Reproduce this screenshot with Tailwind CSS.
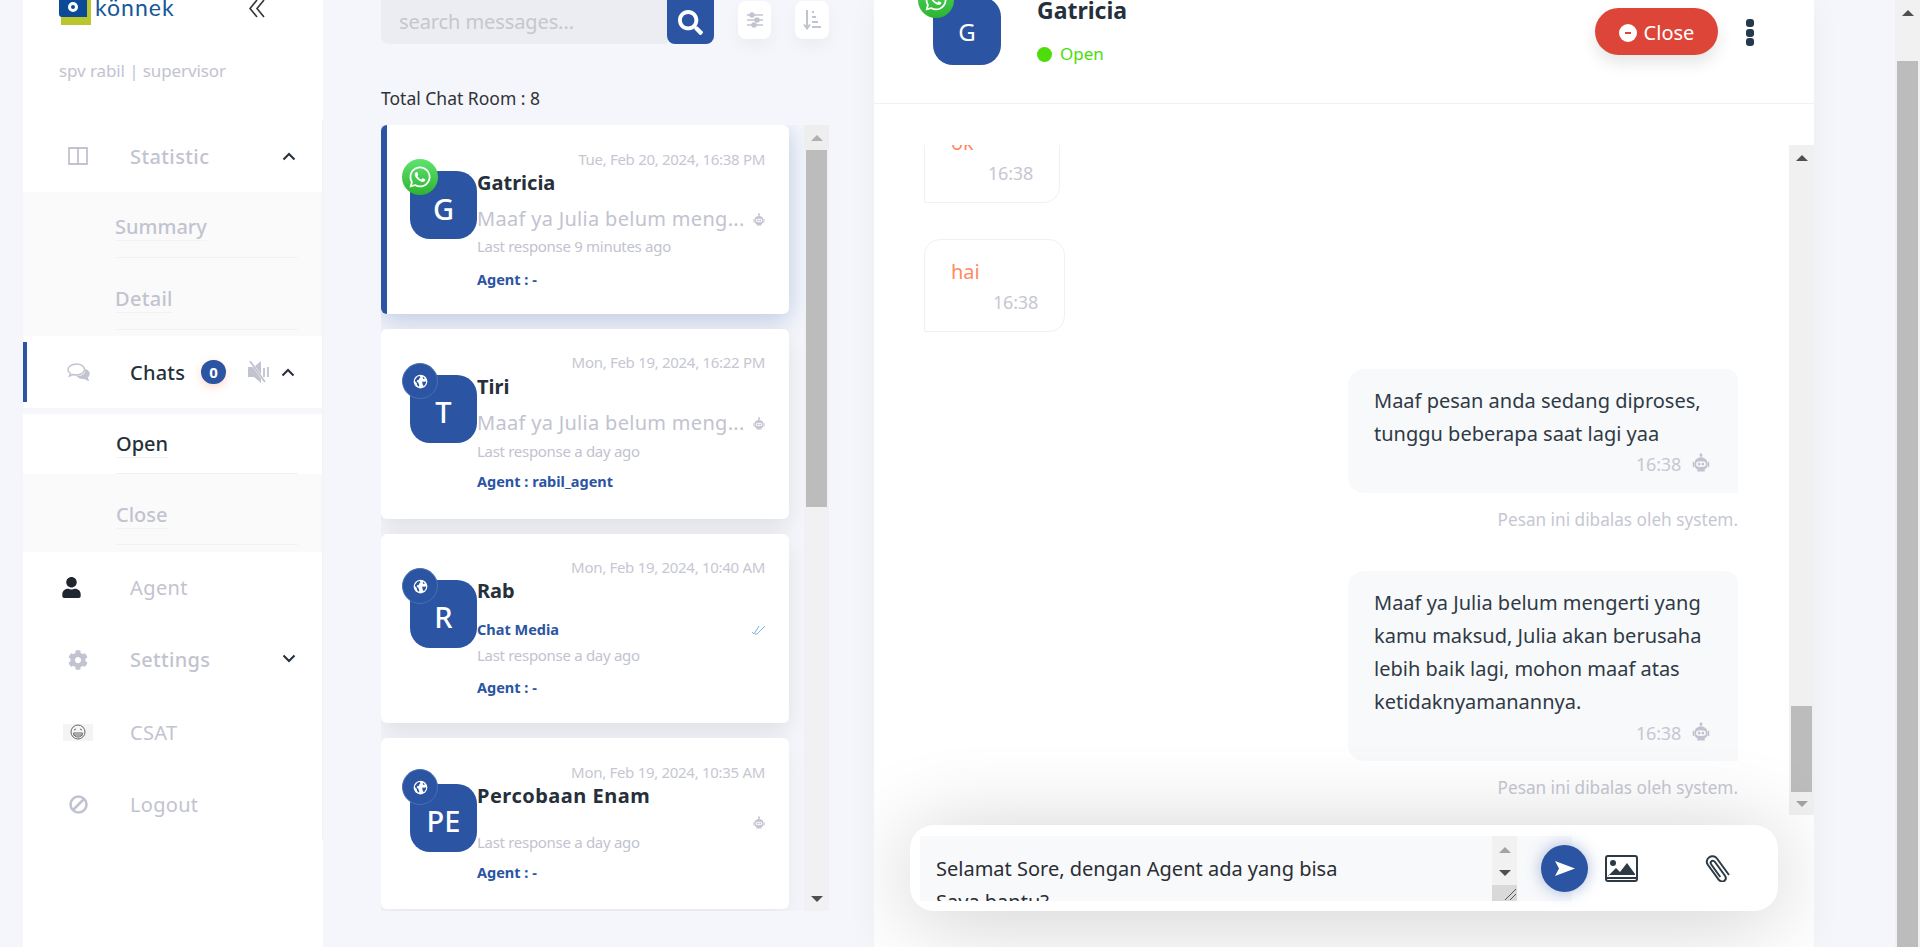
<!DOCTYPE html>
<html lang="id">
<head>
<meta charset="utf-8">
<title>Konnek Chat</title>
<script src="https://cdn.jsdelivr.net/npm/@tailwindcss/browser@4"></script>
</head>
<body class="h-[947px] overflow-hidden bg-[#f4f6fb] text-[#25303b] [font-family:'Noto_Sans',sans-serif]">
<svg class="hidden" aria-hidden="true">
  <symbol id="wa" viewBox="0 0 448 512"><path fill="currentColor" d="M380.9 97.1C339 55.1 283.2 32 223.9 32c-122.4 0-222 99.6-222 222 0 39.1 10.2 77.3 29.6 111L0 480l117.7-30.9c32.4 17.7 68.9 27 106.1 27h.1c122.3 0 224.1-99.6 224.1-222 0-59.3-25.2-115-67.1-157zm-157 341.6c-33.2 0-65.7-8.9-94-25.7l-6.7-4-69.8 18.3L72 359.2l-4.4-7c-18.5-29.4-28.2-63.3-28.2-98.2 0-101.7 82.8-184.5 184.6-184.5 49.3 0 95.6 19.2 130.4 54.1 34.8 34.9 56.2 81.2 56.1 130.5 0 101.8-84.9 184.6-186.6 184.6zm101.2-138.2c-5.5-2.8-32.8-16.2-37.9-18-5.1-1.9-8.8-2.8-12.5 2.8-3.7 5.6-14.3 18-17.6 21.8-3.2 3.7-6.5 4.2-12 1.4-32.6-16.3-54-29.1-75.5-66-5.7-9.8 5.7-9.1 16.3-30.3 1.8-3.7.9-6.9-.5-9.7-1.4-2.8-12.5-30.1-17.1-41.2-4.5-10.8-9.1-9.3-12.5-9.5-3.2-.2-6.9-.2-10.6-.2-3.7 0-9.7 1.4-14.8 6.9-5.1 5.6-19.4 19-19.4 46.3 0 27.3 19.9 53.7 22.6 57.4 2.8 3.7 39.1 59.7 94.8 83.8 35.2 15.2 49 16.5 66.6 13.9 10.7-1.6 32.8-13.4 37.4-26.4 4.6-13 4.6-24.1 3.2-26.4-1.3-2.5-5-3.9-10.5-6.6z"/></symbol>
  <symbol id="globe" viewBox="0 0 24 24"><circle cx="12" cy="12" r="11" fill="currentColor"/><path fill="#2b54a3" d="M3 9.500 7 4.500l3.500-1.500 1.500 2-2 2-1 2.500-2.500.5-.5 2 2.500 2 1.500 4-.5 2.500-3-3-.5-3-2.500-2.500zM15 12l3.500.5 2.500-1-.5 3.500-3 4.500-1.500-1.500-1-3zM16 4.500l3 2.500-2 1-1.500-1.500z"/></symbol>
  <symbol id="robot" viewBox="0 0 24 24"><path fill="currentColor" d="M11.200 0h1.600v5h-1.600z"/><circle cx="12" cy="2" r="2" fill="currentColor"/><circle cx="12" cy="14" r="9" fill="currentColor"/><path fill="currentColor" d="M1 11h2v7H1zM21 11h2v7h-2zM7 22h10v2H7z"/><rect x="5.500" y="10.500" width="13" height="7" rx="3.500" fill="#fff"/><circle cx="9.500" cy="14" r="2" fill="currentColor"/><circle cx="14.500" cy="14" r="2" fill="currentColor"/></symbol>
  <symbol id="chev" viewBox="0 0 14 9"><path d="M1.500 7.500 7 2l5.500 5.500" fill="none" stroke="currentColor" stroke-width="2"/></symbol>
</svg>

<div class="flex h-[947px]">
  <!-- Sidebar -->
  <aside class="ml-[23px] w-[300px] shrink-0 bg-white">
    <div class="relative h-[120px] pl-[36px]">
      <div class="flex h-[24px] items-center">
        <div class="relative -mt-[2px] h-[25px] w-[32px] shrink-0">
          <div class="absolute bottom-[-1px] left-[2px] right-0 top-0 bg-[#b9c62e]"></div>
          <div class="absolute -top-[2px] left-0 right-[4px] flex h-[20px] items-center justify-center rounded-bl-[3px] bg-[#0c4a97]">
            <div class="h-[10px] w-[10px] rounded-full border-[3px] border-white"></div>
          </div>
        </div>
        <span class="ml-[4px] -mt-[9px] text-[23px] leading-none tracking-[1px] text-[#15589b] [font-family:'Lato',sans-serif]">könnek</span>
        <svg class="-mt-[7px] ml-[74px]" width="16" height="18" viewBox="0 0 16 18"><path d="M8 0 1 8.500 8 17M15 0 8 8.500 15 17" fill="none" stroke="#333" stroke-width="1.600"/></svg>
      </div>
      <p class="mt-[36px] text-[17px] leading-[22px] tracking-[-.1px] text-[#c2c3d0]">spv rabil | supervisor</p>
    </div>

    <div class="h-[720px] border-r border-[#f2f2f5] bg-white">
      <!-- Statistic -->
      <div class="flex h-[72px] items-center">
        <div class="flex w-[107px] justify-center pl-[3px]">
          <svg width="20" height="18" viewBox="0 0 20 18"><path fill="none" stroke="#c2c3d0" stroke-width="1.800" d="M1 1h18v16H1zM10 1v16"/></svg>
        </div>
        <span class="mt-[1px] text-[20px] font-medium tracking-[.4px] text-[#c2c3d0]">Statistic</span>
        <svg class="ml-auto mr-[26px] text-[#25303b]" width="14" height="9"><use href="#chev"/></svg>
      </div>
      <div class="h-[144px] bg-[#fafafa] pl-[92px] pr-[24px]">
        <div class="h-[66px] border-b border-[#f2f2f4] pt-[21px]"><span class="inline-block border-b border-[#f3f3f5] text-[20px] font-medium leading-[27px] text-[#c2c3d0]">Summary</span></div>
        <div class="mt-[6px] h-[66px] border-b border-[#f2f2f4] pt-[21px]"><span class="inline-block border-b border-[#f3f3f5] text-[20px] font-medium leading-[27px] tracking-[.3px] text-[#c2c3d0]">Detail</span></div>
      </div>
      <!-- Chats -->
      <div class="relative flex h-[72px] items-center">
        <div class="absolute left-0 top-[6px] h-[60px] w-[4px] bg-[#2b54a3]"></div>
        <div class="flex w-[107px] justify-center pl-[3px]">
          <svg width="23" height="18" viewBox="0 0 23 18" fill="none" stroke="#c2c3d0" stroke-width="1.500"><path d="M9.500 1C5 1 1 3.500 1 6.500c0 1.500 1 3 2.500 4L2.500 13l3.500-1.500c1 .3 2.300.5 3.500.5 4.500 0 8-2.500 8-5.500S14 1 9.500 1z"/><path fill="#c2c3d0" d="M19 7c2 1 3 2.500 3 4 0 1.500-1 2.500-2 3.500l1 2.500-4-2c-2 .3-4.500 0-6-1.500 4 .5 8-2 8-6.500z"/></svg>
        </div>
        <span class="mt-[1px] text-[20px] font-medium tracking-[.2px] text-[#25303b]">Chats</span>
        <span class="ml-[16px] flex h-[24px] w-[25px] items-center justify-center rounded-full bg-[#2b54a3] text-[15px] font-bold text-white shadow-[0_3px_8px_rgba(255,130,80,.3)]">0</span>
        <svg class="ml-[22px]" width="24" height="22" viewBox="0 0 24 22"><path fill="#c2c3d0" d="M0 6h6l7-6v22l-7-6H0z"/><path d="M2 0l15 21" stroke="#fff" stroke-width="2.500"/><path d="M2 0l15 21" stroke="#c2c3d0" stroke-width="1.800"/><path d="M16 7v9M20 6v10" stroke="#c2c3d0" stroke-width="1.800"/></svg>
        <svg class="ml-[9px] text-[#25303b]" width="14" height="9"><use href="#chev"/></svg>
      </div>
      <div class="h-[6px] bg-[#f6f7fb]"></div>
      <div class="h-[60px] bg-white pl-[93px] pr-[24px]">
        <div class="h-[60px] border-b border-[#f2f2f4] pt-[16px]"><span class="inline-block border-b border-[#f3f3f5] text-[20px] font-medium leading-[27px] text-[#25303b]">Open</span></div>
      </div>
      <div class="h-[78px] bg-[#fafafa] pl-[93px] pr-[24px]">
        <div class="h-[71px] border-b border-[#f2f2f4] pt-[27px]"><span class="inline-block border-b border-[#f3f3f5] text-[20px] font-medium leading-[27px] text-[#c2c3d0]">Close</span></div>
      </div>
      <!-- rest -->
      <div class="flex h-[72px] items-center">
        <div class="w-[107px] pl-[39px]"><svg class="-mt-[2px]" width="19" height="21" viewBox="0 0 448 512"><path fill="#1f2630" d="M224 256c70.700 0 128-57.300 128-128S294.700 0 224 0 96 57.300 96 128s57.300 128 128 128zm89.600 32h-16.700c-22.200 10.200-46.900 16-72.900 16s-50.600-5.800-72.900-16h-16.700C60.200 288 0 348.200 0 422.400V464c0 26.500 21.500 48 48 48h352c26.500 0 48-21.500 48-48v-41.600c0-74.200-60.200-134.400-134.400-134.400z"/></svg></div>
        <span class="text-[20px] tracking-[.4px] text-[#c2c3d0]">Agent</span>
      </div>
      <div class="flex h-[72px] items-center">
        <div class="flex w-[107px] justify-center pl-[3px]"><svg width="20" height="20" viewBox="0 0 512 512"><path fill="#c2c3d0" d="M487.400 315.700l-42.600-24.600c4.300-23.200 4.300-47 0-70.200l42.600-24.600c4.900-2.800 7.100-8.600 5.500-14-11.100-35.600-30-67.800-54.700-94.600-3.800-4.100-10-5.100-14.800-2.300L380.800 110c-17.900-15.400-38.500-27.300-60.800-35.100V25.800c0-5.600-3.900-10.500-9.400-11.700-36.700-8.200-74.300-7.800-109.200 0-5.500 1.200-9.400 6.100-9.400 11.700V75c-22.200 7.900-42.800 19.800-60.800 35.100L88.700 85.500c-4.900-2.800-11-1.900-14.800 2.300-24.700 26.700-43.600 58.900-54.700 94.600-1.700 5.400.6 11.200 5.500 14L67.300 221c-4.300 23.200-4.300 47 0 70.200l-42.600 24.600c-4.900 2.800-7.100 8.600-5.500 14 11.100 35.600 30 67.800 54.700 94.600 3.800 4.100 10 5.100 14.800 2.300l42.600-24.600c17.900 15.400 38.500 27.300 60.800 35.100v49.200c0 5.600 3.900 10.500 9.400 11.700 36.700 8.200 74.300 7.800 109.200 0 5.500-1.200 9.400-6.100 9.400-11.700v-49.200c22.200-7.900 42.800-19.800 60.800-35.100l42.600 24.600c4.900 2.800 11 1.900 14.800-2.300 24.700-26.700 43.600-58.900 54.700-94.600 1.500-5.500-.7-11.300-5.600-14.100zM256 336c-44.100 0-80-35.900-80-80s35.900-80 80-80 80 35.900 80 80-35.900 80-80 80z"/></svg></div>
        <span class="text-[20px] font-medium tracking-[.3px] text-[#c2c3d0]">Settings</span>
        <svg class="ml-auto mr-[26px] -mt-[4px] rotate-180 text-[#25303b]" width="14" height="9"><use href="#chev"/></svg>
      </div>
      <div class="flex h-[72px] items-center">
        <div class="w-[107px] pl-[40px]">
          <div class="flex h-[17px] w-[30px] items-center justify-center bg-[#f4f4f4]">
            <svg width="16" height="16" viewBox="0 0 16 16" fill="none" stroke="#666"><circle cx="8" cy="8" r="7"/><path d="M3.500 9h9c0 2.500-2 4-4.500 4s-4.500-1.500-4.500-4z" fill="#eee"/><path d="M3.500 11h9M4 6l2-1M12 6l-2-1"/></svg>
          </div>
        </div>
        <span class="mt-[1px] text-[20px] tracking-[.3px] text-[#c2c3d0]">CSAT</span>
      </div>
      <div class="flex h-[72px] items-center">
        <div class="flex w-[107px] justify-center pl-[4px]"><svg width="19" height="19" viewBox="0 0 19 19" fill="none" stroke="#c2c3d0" stroke-width="2.600"><circle cx="9.500" cy="9.500" r="8"/><path d="M4 15 15 4"/></svg></div>
        <span class="mt-[1px] text-[20px] tracking-[.3px] text-[#c2c3d0]">Logout</span>
      </div>
    </div>
  </aside>

  <!-- Room list -->
  <section class="ml-[58px] w-[448px] shrink-0">
    <div class="flex h-[44px] items-start">
      <div class="flex h-[44px] w-[286px] items-center rounded-bl-[8px] bg-[#ebedf2] pl-[18px] text-[20px] tracking-[-.1px] text-[#c6c7cb]">search messages...</div>
      <div class="flex h-[44px] w-[47px] items-center justify-center rounded-b-[8px] bg-[#2b54a3]">
        <svg width="25" height="25" viewBox="0 0 512 512"><path fill="#fff" d="M505 442.700L405.300 343c-4.500-4.500-10.600-7-17-7H372c27.600-35.300 44-79.700 44-128C416 93.100 322.900 0 208 0S0 93.100 0 208s93.100 208 208 208c48.300 0 92.700-16.400 128-44v16.300c0 6.400 2.500 12.500 7 17l99.700 99.700c9.400 9.400 24.600 9.400 33.900 0l28.300-28.300c9.400-9.400 9.400-24.600.1-34zM208 336c-70.700 0-128-57.200-128-128 0-70.700 57.200-128 128-128 70.700 0 128 57.200 128 128 0 70.700-57.200 128-128 128z"/></svg>
      </div>
      <div class="ml-[24px] mt-[1px] flex h-[38px] w-[33px] items-center justify-center rounded-[8px] bg-white shadow-[0_8px_16px_rgba(0,0,0,.04)]">
        <svg width="16" height="16" viewBox="0 0 16 16" stroke="#c2c3d0" stroke-width="1.500"><path d="M0 3h16M0 8h16M0 13h16"/><circle cx="5" cy="3" r="2" fill="#c2c3d0"/><circle cx="10" cy="8" r="2" fill="#c2c3d0"/><circle cx="7" cy="13" r="2" fill="#c2c3d0"/></svg>
      </div>
      <div class="ml-[24px] mt-[1px] flex h-[38px] w-[34px] items-center justify-center rounded-[8px] bg-white shadow-[0_8px_16px_rgba(0,0,0,.04)]">
        <svg width="18" height="20" viewBox="0 0 18 20" stroke="#c2c3d0" stroke-width="2" fill="none"><path d="M4 0v18M1 14.500l3 4 3-4M9 2h2M9 7h4M9 12h6M9 17h9"/></svg>
      </div>
    </div>
    <p class="mt-[42px] h-[24px] text-[17.500px] leading-[24px] text-[#2f3236]">Total Chat Room : 8</p>
    <div class="mt-[15px] flex h-[786px] overflow-hidden">
      <div class="w-[408px] shrink-0">
        <!-- card 1 -->
        <article class="flex h-[189px] rounded-[6px] border-l-[6px] border-[#2b54a3] bg-white pl-[23px] pr-[24px] shadow-[0_6px_24px_rgba(43,84,163,.28)]">
          <div class="relative mt-[46px] flex h-[68px] w-[67px] shrink-0 items-center justify-center rounded-[20px] bg-[#2b54a3] pt-[7px] text-[29px] font-medium text-white">G
            <div class="absolute -left-[8px] -top-[12px] flex h-[36px] w-[36px] items-center justify-center rounded-full bg-gradient-to-b from-[#5ee36e] to-[#2cb42e] text-white"><svg width="22" height="24"><use href="#wa"/></svg></div>
          </div>
          <div class="min-w-0 flex-1 pt-[24px]">
            <p class="h-[20px] text-right text-[15px] leading-[20px] tracking-[-.3px] text-[#c6c7d2]">Tue, Feb 20, 2024, 16:38 PM</p>
            <p class="-mt-[1px] h-[30px] text-[20px] font-bold leading-[30px] text-[#25303b]">Gatricia</p>
            <div class="mt-[6px] flex h-[30px] items-center justify-between"><span class="w-[268px] overflow-hidden text-[20px] tracking-[.3px] whitespace-nowrap text-[#c2c3d0]">Maaf ya Julia belum meng...</span><svg class="shrink-0 text-[#c2c3d0]" width="12" height="13"><use href="#robot"/></svg></div>
            <p class="mt-[2px] h-[20px] text-[15px] leading-[20px] tracking-[-.3px] text-[#c2c3d0]">Last response 9 minutes ago</p>
            <p class="mt-[13px] h-[20px] text-[14.500px] font-bold leading-[20px] text-[#2b54a3]">Agent : -</p>
          </div>
        </article>
        <!-- card 2 -->
        <article class="mt-[15px] flex h-[190px] rounded-[6px] bg-white pl-[29px] pr-[24px] shadow-[0_10px_24px_rgba(0,0,0,.09)]">
          <div class="relative mt-[46px] flex h-[68px] w-[67px] shrink-0 items-center justify-center rounded-[20px] bg-[#2b54a3] pt-[6px] text-[29px] font-medium text-white">T
            <div class="absolute -left-[8px] -top-[12px] flex h-[36px] w-[36px] items-center justify-center rounded-full border border-[#4a6fb5] bg-[#2b54a3] text-white"><svg width="15" height="15"><use href="#globe"/></svg></div>
          </div>
          <div class="min-w-0 flex-1 pt-[23px]">
            <p class="h-[20px] text-right text-[15px] leading-[20px] tracking-[-.3px] text-[#c6c7d2]">Mon, Feb 19, 2024, 16:22 PM</p>
            <p class="h-[30px] text-[20px] font-bold leading-[30px] text-[#25303b]">Tiri</p>
            <div class="mt-[6px] flex h-[30px] items-center justify-between"><span class="w-[268px] overflow-hidden text-[20px] tracking-[.3px] whitespace-nowrap text-[#c2c3d0]">Maaf ya Julia belum meng...</span><svg class="shrink-0 text-[#c2c3d0]" width="12" height="13"><use href="#robot"/></svg></div>
            <p class="mt-[3px] h-[20px] text-[15px] leading-[20px] tracking-[-.3px] text-[#c2c3d0]">Last response a day ago</p>
            <p class="mt-[10px] h-[20px] text-[14.500px] font-bold leading-[20px] text-[#2b54a3]">Agent : rabil_agent</p>
          </div>
        </article>
        <!-- card 3 -->
        <article class="mt-[15px] flex h-[189px] rounded-[6px] bg-white pl-[29px] pr-[24px] shadow-[0_10px_24px_rgba(0,0,0,.09)]">
          <div class="relative mt-[46px] flex h-[68px] w-[67px] shrink-0 items-center justify-center rounded-[20px] bg-[#2b54a3] pt-[6px] text-[29px] font-medium text-white">R
            <div class="absolute -left-[8px] -top-[12px] flex h-[36px] w-[36px] items-center justify-center rounded-full border border-[#4a6fb5] bg-[#2b54a3] text-white"><svg width="15" height="15"><use href="#globe"/></svg></div>
          </div>
          <div class="min-w-0 flex-1 pt-[23px]">
            <p class="h-[20px] text-right text-[15px] leading-[20px] tracking-[-.3px] text-[#c6c7d2]">Mon, Feb 19, 2024, 10:40 AM</p>
            <p class="-mt-[1px] h-[30px] text-[20px] font-bold leading-[30px] text-[#25303b]">Rab</p>
            <div class="mt-[12px] flex h-[24px] items-center justify-between"><span class="text-[14.500px] font-bold text-[#2b54a3]">Chat Media</span><svg width="13" height="9" viewBox="0 0 13 9" fill="none" stroke="#7db4ee"><path d="M0 6l2 2 5-8M5 8l8-8M3 8h2"/></svg></div>
            <p class="mt-[3px] h-[20px] text-[15px] leading-[20px] tracking-[-.3px] text-[#c2c3d0]">Last response a day ago</p>
            <p class="mt-[12px] h-[20px] text-[14.500px] font-bold leading-[20px] text-[#2b54a3]">Agent : -</p>
          </div>
        </article>
        <!-- card 4 -->
        <article class="mt-[15px] flex h-[171px] rounded-[6px] bg-white pl-[29px] pr-[24px] shadow-[0_10px_24px_rgba(0,0,0,.06)]">
          <div class="relative mt-[46px] flex h-[68px] w-[67px] shrink-0 items-center justify-center rounded-[20px] bg-[#2b54a3] pt-[6px] text-[29px] font-medium text-white">PE
            <div class="absolute -left-[8px] -top-[15px] flex h-[36px] w-[36px] items-center justify-center rounded-full border border-[#4a6fb5] bg-[#2b54a3] text-white"><svg width="15" height="15"><use href="#globe"/></svg></div>
          </div>
          <div class="min-w-0 flex-1 pt-[24px]">
            <p class="h-[20px] text-right text-[15px] leading-[20px] tracking-[-.3px] text-[#c6c7d2]">Mon, Feb 19, 2024, 10:35 AM</p>
            <p class="-mt-[1px] h-[30px] text-[20px] font-bold leading-[30px] tracking-[.5px] text-[#25303b]">Percobaan Enam</p>
            <div class="flex h-[22px] items-center justify-end"><svg class="text-[#c2c3d0]" width="12" height="13"><use href="#robot"/></svg></div>
            <p class="-mt-[1px] h-[20px] text-[15px] leading-[20px] tracking-[-.3px] text-[#c2c3d0]">Last response a day ago</p>
            <p class="mt-[10px] h-[20px] text-[14.500px] font-bold leading-[20px] text-[#2b54a3]">Agent : -</p>
          </div>
        </article>
      </div>
      <!-- list scrollbar -->
      <div class="ml-[15px] flex w-[25px] flex-col items-center bg-[#f1f1f3]">
        <div class="flex h-[25px] w-full items-center justify-center bg-[#eeeeee]"><div class="h-0 w-0 border-x-[6px] border-b-[6px] border-x-transparent border-b-[#b0b0b0]"></div></div>
        <div class="h-[357px] w-[21px] bg-[#bcbcbc]"></div>
        <div class="mt-auto flex h-[25px] w-full items-center justify-center"><div class="h-0 w-0 border-x-[6px] border-t-[6px] border-x-transparent border-t-[#505050]"></div></div>
      </div>
    </div>
  </section>

  <!-- Conversation -->
  <section class="ml-[45px] h-[947px] w-[940px] shrink-0 overflow-hidden bg-white shadow-[0_0_30px_rgba(0,0,0,.04)]">
    <header class="flex h-[104px] items-start border-b border-[#f0f1f4] pl-[59px]">
      <div class="relative -mt-[3px] flex h-[68px] w-[68px] shrink-0 items-center justify-center rounded-[20px] bg-[#2b54a3] pt-[2px] text-[24px] text-white">G
        <div class="absolute -left-[15px] -top-[15px] flex h-[36px] w-[36px] items-center justify-center rounded-full bg-gradient-to-b from-[#4fd55f] to-[#2cb42e] text-white"><svg width="22" height="24"><use href="#wa"/></svg></div>
      </div>
      <div class="ml-[36px]">
        <p class="-mt-[5px] h-[30px] text-[23px] font-bold leading-[30px] text-[#25303b]">Gatricia</p>
        <div class="mt-[18px] flex h-[22px] items-center gap-[8px]">
          <span class="h-[15px] w-[15px] rounded-full bg-[#4cdd0a]"></span>
          <span class="text-[17px] text-[#4cdd0a]">Open</span>
        </div>
      </div>
      <button class="ml-auto mt-[8px] flex h-[47px] w-[123px] items-center justify-center gap-[7px] rounded-[24px] bg-[#dd4539] pt-[2px] text-[20px] text-white shadow-[0_8px_16px_rgba(0,0,0,.1)]">
        <span class="relative flex h-[18px] w-[18px] items-center justify-center rounded-full bg-white"><span class="h-[2px] w-[6px] bg-[#dd4539]"></span></span>Close
      </button>
      <div class="ml-[28px] mr-[60px] mt-[19px] flex h-[27px] w-[8px] flex-col justify-between">
        <span class="h-[8px] rounded-[3px] bg-[#25394d]"></span><span class="h-[8px] rounded-[3px] bg-[#25394d]"></span><span class="h-[8px] rounded-[3px] bg-[#25394d]"></span>
      </div>
    </header>

    <div class="mt-[41px] flex h-[670px]">
      <div class="w-[915px] shrink-0 overflow-hidden pl-[50px] pr-[51px]">
        <div class="-mt-[35px] flex h-[93px] w-[136px] flex-col rounded-tl-[16px] rounded-tr-[16px] rounded-br-[16px] border border-[#f1f1f4] pl-[26px] pr-[26px]">
          <p class="mt-[17px] h-[30px] text-[20px] leading-[30px] text-[#ff8a65]">ok</p>
          <p class="mt-[3px] h-[24px] text-right text-[18px] leading-[24px] tracking-[-.2px] text-[#c6c7d2]">16:38</p>
        </div>
        <div class="mt-[36px] flex h-[93px] w-[141px] flex-col rounded-tl-[16px] rounded-tr-[16px] rounded-br-[16px] border border-[#f1f1f4] pl-[26px] pr-[26px]">
          <p class="mt-[17px] h-[30px] text-[20px] leading-[30px] text-[#ff8a65]">hai</p>
          <p class="mt-[3px] h-[24px] text-right text-[18px] leading-[24px] tracking-[-.2px] text-[#c6c7d2]">16:38</p>
        </div>
        <div class="ml-auto mt-[37px] h-[124px] w-[390px] rounded-l-[16px] rounded-tr-[12px] bg-[#f8f9fb] pl-[26px] pr-[28px] pt-[15px]">
          <p class="text-[20px] leading-[33px] text-[#2f3a45]">Maaf pesan anda sedang diproses, tunggu beberapa saat lagi yaa</p>
          <div class="mt-[2px] flex h-[24px] items-center justify-end gap-[11px] text-[18px] tracking-[-.2px] text-[#c6c7d2]">16:38<svg class="-mt-[4px] text-[#c2c3d0]" width="18" height="21"><use href="#robot"/></svg></div>
        </div>
        <p class="mt-[15px] h-[24px] text-right text-[17.200px] leading-[24px] text-[#c6c7d2]">Pesan ini dibalas oleh system.</p>
        <div class="ml-auto mt-[39px] h-[190px] w-[390px] rounded-l-[16px] rounded-tr-[12px] bg-[#f8f9fb] pl-[26px] pr-[20px] pt-[15px]">
          <p class="text-[20px] leading-[33px] text-[#2f3a45]">Maaf ya Julia belum mengerti yang kamu maksud, Julia akan berusaha lebih baik lagi, mohon maaf atas ketidaknyamanannya.</p>
          <div class="mt-[3px] flex h-[24px] items-center justify-end gap-[11px] pr-[8px] text-[18px] tracking-[-.2px] text-[#c6c7d2]">16:38<svg class="-mt-[4px] text-[#c2c3d0]" width="18" height="21"><use href="#robot"/></svg></div>
        </div>
        <p class="mt-[15px] h-[24px] text-right text-[17.200px] leading-[24px] text-[#c6c7d2]">Pesan ini dibalas oleh system.</p>
      </div>
      <div class="flex w-[25px] flex-col items-center bg-[#f0f0f1]">
        <div class="flex h-[25px] items-center"><div class="h-0 w-0 border-x-[6px] border-b-[6px] border-x-transparent border-b-[#505050]"></div></div>
        <div class="mt-auto h-[86px] w-[21px] bg-[#bcbcbc]"></div>
        <div class="flex h-[23px] items-center"><div class="h-0 w-0 border-x-[6px] border-t-[6px] border-x-transparent border-t-[#a3a3a3]"></div></div>
      </div>
    </div>

    <div class="relative ml-[36px] mt-[10px] flex h-[86px] w-[868px] items-center rounded-[24px] bg-white pl-[10px] shadow-[0_8px_90px_rgba(0,0,0,.2)]">
      <div class="flex h-[65px] w-[597px] shrink-0 overflow-hidden bg-[#f8f9fb]">
        <p class="w-[572px] pl-[16px] pt-[16px] text-[20px] leading-[33px] text-[#2a2e33]">Selamat Sore, dengan Agent ada yang bisa<br>Saya bantu?</p>
        <div class="flex w-[25px] flex-col items-center bg-[#f1f1f1]">
          <div class="mt-[11px] h-0 w-0 border-x-[6px] border-b-[6px] border-x-transparent border-b-[#a3a3a3]"></div>
          <div class="mt-[17px] h-0 w-0 border-x-[6px] border-t-[6px] border-x-transparent border-t-[#505050]"></div>
          <div class="relative mt-[9px] h-[26px] w-full bg-[#d9d9d9]"><svg class="absolute bottom-0 right-0" width="14" height="14" viewBox="0 0 14 14" stroke="#555"><path d="M2 13 13 2M7 13l6-6"/></svg></div>
        </div>
      </div>
      <div class="flex h-[65px] w-[55px] shrink-0 items-center bg-[#f8f9fb] pl-[24px]">
        <span class="flex h-[47px] w-[47px] shrink-0 items-center justify-center rounded-full bg-[#2b54a3] shadow-[0_0_16px_rgba(43,84,163,.4)]">
          <svg width="20" height="15" viewBox="0 0 20 15"><path fill="#fff" d="M0 0l20 7.500L0 15l4-7.500z"/></svg>
        </span>
      </div>
      <svg class="ml-[33px]" width="33" height="27" viewBox="0 0 33 27"><rect x="1" y="1" width="31" height="25" rx="2" fill="#fff" stroke="#2c3a46" stroke-width="2"/><path fill="#2c3a46" d="M3 21l8-8 4 4 7-9 8 11v1H3z"/><circle cx="8" cy="8" r="3" fill="#2c3a46"/><path stroke="#2c3a46" stroke-width="2" d="M1 23h31"/></svg>
      <svg class="ml-[67px]" width="26" height="27" viewBox="0 0 26 27" fill="none" stroke="#2c3a46" stroke-width="2"><path d="M24 20 12 3.500C10 1 6.500 .5 4 2.500S1 7.500 3 10l11 15c1.500 1.500 4 2 5.500 .7s1.500-3.500.5-5L10 7C9 5.700 7.500 5.500 6.500 6.300S5.500 8.500 6.300 9.500l9 12.500"/></svg>
    </div>
  </section>

  <!-- Page scrollbar -->
  <div class="ml-[81px] flex h-[947px] w-[25px] flex-col items-center bg-[#f1f1f1]">
    <div class="flex h-[61px] justify-center pt-[10px]"><div class="h-0 w-0 border-x-[6px] border-b-[6px] border-x-transparent border-b-[#505050]"></div></div>
    <div class="h-[886px] w-[21px] bg-[#bcbcbc]"></div>
  </div>
</div>
</body>
</html>
